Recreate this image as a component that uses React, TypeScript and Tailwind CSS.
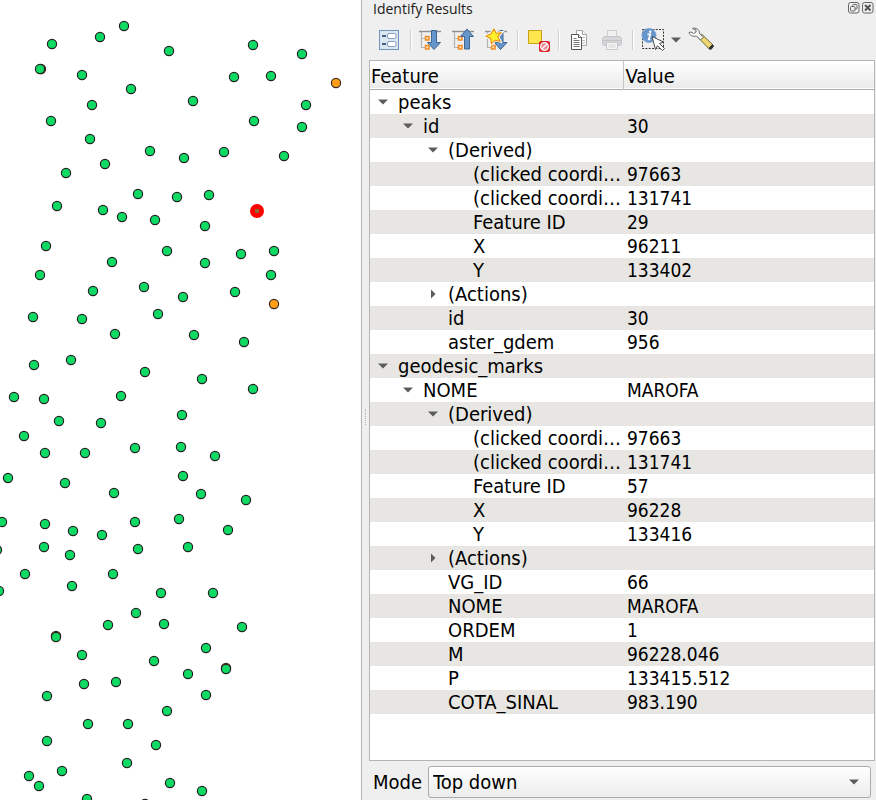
import { useState } from "react";
import type { ReactNode } from "react";

type Point = [number, number];

const peaks: Point[] = [
  [52, 44], [100, 37], [124, 26], [169, 51], [253, 45], [302, 54], [40, 69], [82, 75],
  [234, 77], [271, 76], [131, 89], [92, 105], [193, 101], [306, 105], [51, 121], [254, 121],
  [302, 127], [90, 139], [150, 151], [184, 158], [224, 152], [284, 156], [105, 164], [66, 173],
  [138, 194], [177, 197], [209, 195], [57, 206], [103, 210], [122, 217], [155, 220], [205, 226],
  [46, 246], [167, 251], [241, 254], [274, 251], [112, 262], [205, 263],
  [40, 275], [271, 275], [93, 291], [144, 287], [183, 297], [235, 292], [158, 314], [33, 317],
  [82, 319], [115, 334], [194, 335], [244, 342], [71, 360], [34, 365], [145, 372], [202, 379],
  [253, 389], [14, 397], [44, 399], [121, 396], [182, 415], [59, 421], [101, 423], [24, 436],
  [45, 453], [85, 453], [135, 448], [181, 447], [215, 456], [8, 478], [65, 483], [183, 476],
  [114, 493], [201, 494], [246, 500], [2, 522], [45, 524], [135, 522], [179, 519], [73, 531],
  [228, 530], [102, 535], [44, 547], [70, 555], [138, 549], [188, 547], [-3, 550], [25, 574],
  [113, 574], [-1, 591], [72, 586], [161, 593], [213, 593], [136, 613], [108, 625], [164, 624],
  [242, 627], [56, 637], [82, 655], [206, 648], [154, 661], [226, 669], [188, 674], [84, 684],
  [116, 682], [47, 696], [206, 695], [167, 711], [88, 724], [128, 724], [47, 741], [156, 745],
  [127, 763], [62, 771], [29, 776], [39, 786], [170, 783], [202, 791], [87, 799], [145, 804],
];

const marks: Point[] = [[336, 83], [274, 304], [41, 69], [56, 636], [226, 668]];

type Row = { level: 0 | 1 | 2 | 3; name: string; value?: string; state?: "open" | "closed" };

const rows: Row[] = [
  { level: 0, name: "peaks", state: "open" },
  { level: 1, name: "id", value: "30", state: "open" },
  { level: 2, name: "(Derived)", state: "open" },
  { level: 3, name: "(clicked coordi…", value: "97663" },
  { level: 3, name: "(clicked coordi…", value: "131741" },
  { level: 3, name: "Feature ID", value: "29" },
  { level: 3, name: "X", value: "96211" },
  { level: 3, name: "Y", value: "133402" },
  { level: 2, name: "(Actions)", state: "closed" },
  { level: 2, name: "id", value: "30" },
  { level: 2, name: "aster_gdem", value: "956" },
  { level: 0, name: "geodesic_marks", state: "open" },
  { level: 1, name: "NOME", value: "MAROFA", state: "open" },
  { level: 2, name: "(Derived)", state: "open" },
  { level: 3, name: "(clicked coordi…", value: "97663" },
  { level: 3, name: "(clicked coordi…", value: "131741" },
  { level: 3, name: "Feature ID", value: "57" },
  { level: 3, name: "X", value: "96228" },
  { level: 3, name: "Y", value: "133416" },
  { level: 2, name: "(Actions)", state: "closed" },
  { level: 2, name: "VG_ID", value: "66" },
  { level: 2, name: "NOME", value: "MAROFA" },
  { level: 2, name: "ORDEM", value: "1" },
  { level: 2, name: "M", value: "96228.046" },
  { level: 2, name: "P", value: "133415.512" },
  { level: 2, name: "COTA_SINAL", value: "983.190" },
];

const indent = ["pl-0", "pl-[25px]", "pl-[50px]", "pl-[75px]"];

function MapCanvas() {
  return (
    <svg className="block h-full w-full" role="img" aria-label="Map of peaks and geodesic marks">
      {marks.map(([x, y]) => (
        <circle key={`m${x}-${y}`} cx={x} cy={y} r="4.6" fill="#ff9e17" stroke="#3a2c22" strokeWidth="1.2" />
      ))}
      {peaks.map(([x, y]) => (
        <circle key={`p${x}-${y}`} cx={x} cy={y} r="4.6" fill="#0fda63" stroke="#232323" strokeWidth="1.2" />
      ))}
      <circle cx="257" cy="211" r="7" fill="#ff0000" />
      <rect x="255" y="209" width="4" height="4" rx="1" fill="#8a6d33" />
    </svg>
  );
}

function Caret({ closed = false }: { closed?: boolean }) {
  return (
    <svg width="10" height="10" viewBox="0 0 10 10" aria-hidden="true">
      <path d={closed ? "M3 0.5 7.5 5 3 9.5Z" : "M0 2.5h10L5 7.5Z"} fill="#5c5c5c" />
    </svg>
  );
}

function TreeGlyph() {
  return (
    <g>
      <path d="M0 3.5h22" stroke="#8f8f8f" strokeWidth="1.4" />
      <path d="M2.500 4v16M2.500 10.500h4M2.500 19.500h4" stroke="#b4b4b4" strokeWidth="1.2" fill="none" />
      <rect x="6.500" y="8.500" width="3.500" height="3.500" fill="#ffe3c2" stroke="#f08a24" strokeWidth="1.5" />
      <rect x="6.500" y="17.500" width="3.500" height="3.500" fill="#ffe3c2" stroke="#f08a24" strokeWidth="1.5" />
    </g>
  );
}

function ExpandIcon() {
  return (
    <svg width="24" height="24" viewBox="0 0 24 24">
      <TreeGlyph />
      <path d="M12.500 2.500h5v12h4L15 21.500 8.500 14.500h4Z" fill="#6695c9" stroke="#3e6590" />
    </svg>
  );
}

function CollapseIcon() {
  return (
    <svg width="24" height="24" viewBox="0 0 24 24">
      <TreeGlyph />
      <path d="M12.500 21h5V8.500h4L15 1 8.500 8.500h4Z" fill="#6695c9" stroke="#3e6590" />
    </svg>
  );
}

const STAR = "m9 1 2.200 4.300 4.900-.6-3.300 3.800 2.200 4.600-4.900-.8-3.700 3.300-.8-5L1 8.200l4.700-2.200Z";

function ExpandNewIcon() {
  return (
    <svg width="24" height="24" viewBox="0 0 24 24">
      <TreeGlyph />
      <path d="M15 2.500h3v12h4L15.500 21.500 9.500 14.500H15Z" fill="#6695c9" stroke="#3e6590" />
      <path d={STAR} fill="#fff12e" stroke="#fff" strokeWidth="3" />
      <path d={STAR} fill="#fff12e" stroke="#e8941c" strokeWidth="1.2" />
    </svg>
  );
}

function FormIcon() {
  return (
    <svg width="24" height="24" viewBox="0 0 24 24">
      <rect x="2.500" y="2.500" width="19" height="19" fill="#dce6f1" stroke="#6f96c0" />
      <path d="M5 8h4M5 16h4" stroke="#44607c" strokeWidth="1.800" />
      <rect x="10.500" y="5.500" width="8.500" height="5" rx="1.500" fill="#fff" stroke="#7f9fc0" />
      <rect x="10.500" y="13.500" width="8.500" height="5" rx="1.500" fill="#fff" stroke="#7f9fc0" />
    </svg>
  );
}

function ClearIcon() {
  return (
    <svg width="24" height="24" viewBox="0 0 24 24">
      <rect x="2.500" y="2.500" width="13" height="13" fill="#fde74c" stroke="#c9a21a" />
      <rect x="13" y="13" width="11" height="11" rx="2" fill="#dc2430" />
      <circle cx="18.500" cy="18.500" r="3.800" fill="#e98a90" stroke="#fff" strokeWidth="1.300" />
      <path d="m16 21 5-5" stroke="#fff" strokeWidth="1.300" />
    </svg>
  );
}

function CopyIcon() {
  return (
    <svg width="24" height="24" viewBox="0 0 24 24" fill="#fff">
      <path d="M9.500 2.500h6l4 4v11h-10Z" stroke="#a5a5a5" />
      <path d="M15.500 2.500v4h4" stroke="#a5a5a5" />
      <path d="M15 9.500h3M15 12.500h3M15 15h3" stroke="#bdbdbd" />
      <path d="M4.500 6.500h7l3 3v12h-10Z" stroke="#555" />
      <path d="M11.500 6.500v3h3" stroke="#555" />
      <path d="M6.500 10.500h3M6.500 12.500h6M6.500 14.500h6M6.500 16.500h6M6.500 18.500h6" stroke="#777" />
    </svg>
  );
}

function PrintIcon() {
  return (
    <svg width="24" height="24" viewBox="0 0 24 24">
      <path d="M7.500 10V2.500h9V10" fill="#f1f1f1" stroke="#cdcdcd" />
      <rect x="2.500" y="8.500" width="19" height="9" rx="2.500" fill="#d5d7da" stroke="#c3c5c8" />
      <path d="M3 12.500h18" stroke="#bfc1c4" />
      <rect x="6.500" y="14.500" width="11" height="7" fill="#f4f4f4" stroke="#c8c8c8" />
      <path d="M8.500 17h7M8.500 19h7" stroke="#d6d6d6" />
    </svg>
  );
}

function IdentifyIcon() {
  return (
    <svg width="24" height="24" viewBox="0 0 24 24">
      <rect x="1.500" y="1.500" width="21" height="19" fill="none" stroke="#333" strokeDasharray="2 1.300" />
      <circle cx="8" cy="7.500" r="7.200" fill="#6495cb" stroke="#8db0d8" strokeWidth=".6" />
      <circle cx="9.200" cy="3.700" r="1.200" fill="#fff" />
      <path d="M6.500 6.400h2.800L7.700 11.500h1.600" stroke="#fff" strokeWidth="1.700" fill="none" />
      <path d="m11 8.500 11.500 5.500-4 1.500 5 5-2.200 2-4.800-4.800-2 3.800Z" fill="#fff" stroke="#4d4d4d" />
    </svg>
  );
}

function WrenchIcon() {
  return (
    <svg width="28" height="28" viewBox="0 0 28 28">
      <path d="m11 11.500 3.500-3.500 11 10.500-3.700 4Z" fill="#efd873" stroke="#6f6639" />
      <path d="m21.800 22.500 3.700-4 1 1.800-2.500 3.200Z" fill="#333" stroke="#333" />
      <path
        d="M5.500 2.500c3-1 7 .5 7 5l4 3.500-3 3-4-4C6 11 2.500 9.500 2 6.500l2-.5 2.500 1.500 2.500-1.500V4Z"
        fill="#f7f7f7"
        stroke="#6d6d6d"
      />
    </svg>
  );
}

function ToolButton({ label, children }: { label: string; children: ReactNode }) {
  return (
    <button type="button" aria-label={label} className="flex shrink-0 items-center justify-center">
      {children}
    </button>
  );
}

function Separator() {
  return <span className="h-5 w-px shrink-0 bg-[#cfcfcf] shadow-[1px_0_0_#ffffff]" />;
}

function TitleBar() {
  return (
    <header className="flex h-[18px] items-start justify-between pr-px pl-1">
      <h1 className="font-['Open_Sans','Noto_Sans',sans-serif] text-[14px] leading-[18px] text-[#1a1a1a]">
        Identify Results
      </h1>
      <div className="flex gap-0.5 pt-0.5">
        <button type="button" aria-label="Float panel">
          <svg className="block" width="12" height="12" viewBox="0 0 12 12" fill="none" stroke="#666">
            <rect x=".5" y=".5" width="10.500" height="10.500" rx="2" />
            <rect x="4.500" y="2.500" width="4.500" height="4.500" rx="1" />
            <rect x="2.500" y="4.500" width="4.500" height="4.500" rx="1" fill="#efefef" />
          </svg>
        </button>
        <button type="button" aria-label="Close panel">
          <svg className="block" width="12" height="12" viewBox="0 0 12 12" fill="none" stroke="#666">
            <rect x=".5" y=".5" width="10.500" height="10.500" rx="2" />
            <path d="m3 3 5.500 5.500M8.500 3 3 8.500" stroke="#555" strokeWidth="2" />
          </svg>
        </button>
      </div>
    </header>
  );
}

function Toolbar() {
  return (
    <div className="flex h-[42px] items-center pt-0.5 pl-2" role="toolbar" aria-label="Identify tools">
      <div className="flex items-center gap-[9px]">
        <ToolButton label="View feature form"><FormIcon /></ToolButton>
        <div className="flex items-center gap-2">
          <Separator />
          <div className="flex items-center gap-[9px]">
            <ToolButton label="Expand tree"><ExpandIcon /></ToolButton>
            <ToolButton label="Collapse tree"><CollapseIcon /></ToolButton>
            <ToolButton label="Expand new results"><ExpandNewIcon /></ToolButton>
          </div>
          <Separator />
          <ToolButton label="Clear results"><ClearIcon /></ToolButton>
          <Separator />
          <div className="flex items-center gap-[9px]">
            <ToolButton label="Copy feature"><CopyIcon /></ToolButton>
            <ToolButton label="Print response"><PrintIcon /></ToolButton>
          </div>
          <Separator />
          <div className="flex items-center gap-1.5">
            <ToolButton label="Identify features"><IdentifyIcon /></ToolButton>
            <ToolButton label="Identify mode menu"><Caret /></ToolButton>
            <ToolButton label="Settings"><WrenchIcon /></ToolButton>
          </div>
        </div>
      </div>
    </div>
  );
}

function ResultsTree() {
  return (
    <div className="min-h-0 flex-1 overflow-hidden border border-[#b4b4b4] bg-white">
      <table className="w-full table-fixed border-collapse text-left">
        <colgroup>
          <col className="w-[253px]" />
          <col />
        </colgroup>
        <thead>
          <tr className="h-7 border-b border-[#acacac] bg-linear-to-b from-white to-[#ebebeb]">
            <th className="border-r border-[#c4c4c4] p-0 pt-0.5 pl-px font-normal">Feature</th>
            <th className="p-0 pt-0.5 pl-0.5 font-normal">Value</th>
          </tr>
        </thead>
        <tbody>
          {rows.map((row, i) => (
            <tr key={i} className="h-6 even:bg-[#e7e6e2]">
              <td className={`p-0 ${indent[row.level]}`}>
                <div className="flex h-6 items-center gap-[3px]">
                  {row.state ? (
                    <button
                      type="button"
                      aria-label={`Toggle ${row.name}`}
                      className="flex w-[25px] shrink-0 justify-center"
                    >
                      <Caret closed={row.state === "closed"} />
                    </button>
                  ) : (
                    <span className="w-[25px] shrink-0" />
                  )}
                  <span className="whitespace-nowrap">{row.name}</span>
                </div>
              </td>
              <td className="p-0 pl-1 text-[19px]">{row.value}</td>
            </tr>
          ))}
        </tbody>
      </table>
    </div>
  );
}

function ModeBar() {
  const [mode, setMode] = useState("Top down");
  return (
    <div className="flex items-center gap-1.5 pt-[5px] pr-1 pb-0.5 pl-1">
      <label htmlFor="mode">Mode</label>
      <div className="relative flex-1">
        <select
          id="mode"
          value={mode}
          onChange={(e) => setMode(e.target.value)}
          className="block h-8 w-full appearance-none rounded-[3px] border border-[#aaa] bg-linear-to-b from-white to-[#ececec] pl-1"
        >
          <option>Top down</option>
          <option>Current layer</option>
          <option>Top down, stop at first</option>
          <option>Layer selection</option>
        </select>
        <span className="pointer-events-none absolute inset-y-0 right-3 flex items-center">
          <Caret />
        </span>
      </div>
    </div>
  );
}

export default function App() {
  return (
    <div className="flex h-screen overflow-hidden bg-[#efefef] font-['DejaVu_Sans_Condensed','Noto_Sans',sans-serif] text-[20px] leading-6 text-black">
      <main className="min-w-0 flex-1 bg-white">
        <MapCanvas />
      </main>
      <div className="flex w-2 shrink-0 items-center justify-center border-l border-[#b4b4b4] pt-[34px]">
        <span className="h-4 border-l border-dotted border-[#b0b0b0]" />
      </div>
      <section className="flex w-[507px] shrink-0 flex-col pr-px" aria-label="Identify Results">
        <TitleBar />
        <Toolbar />
        <ResultsTree />
        <ModeBar />
      </section>
    </div>
  );
}
